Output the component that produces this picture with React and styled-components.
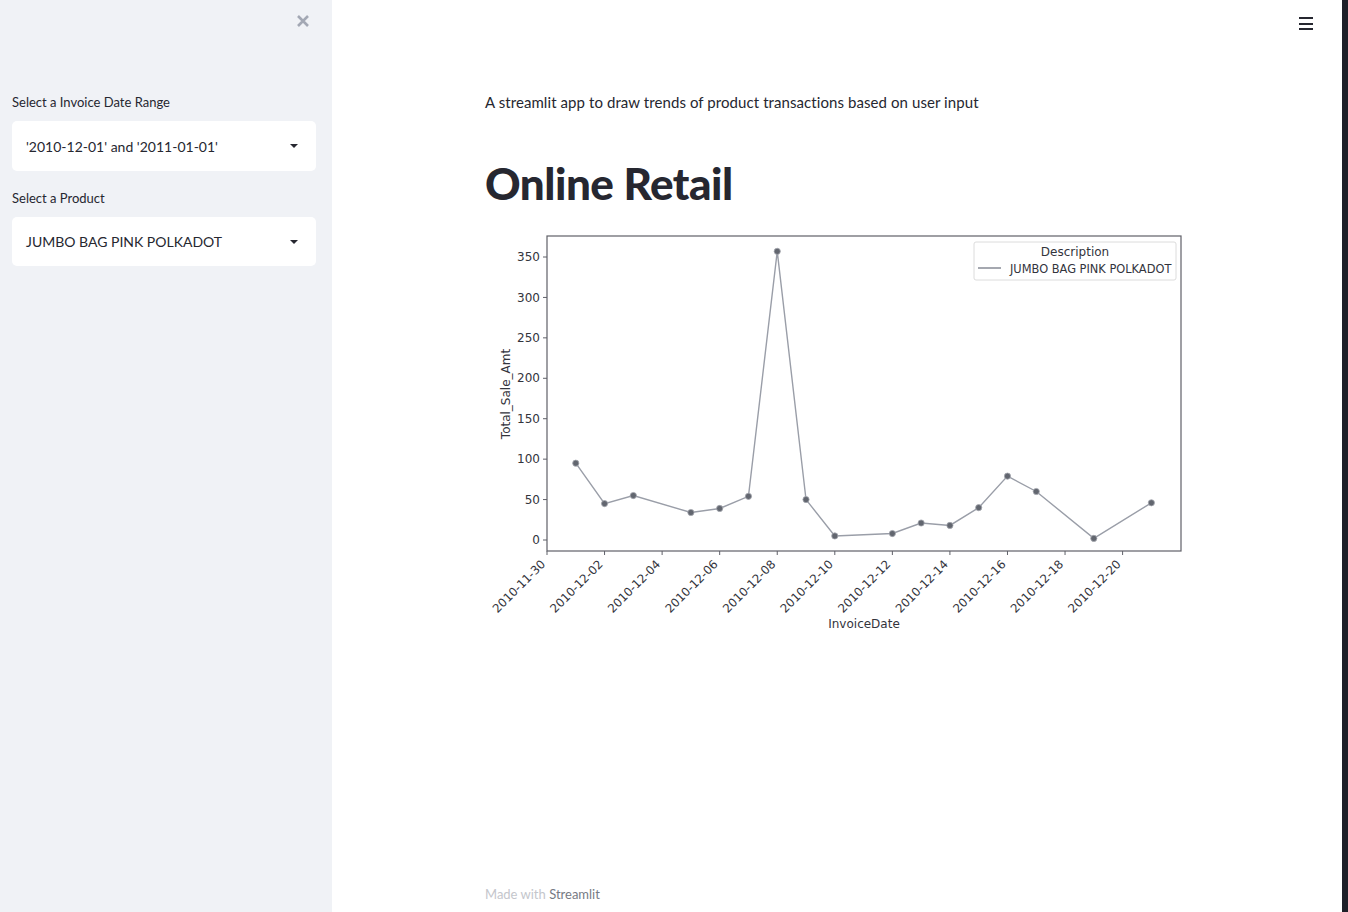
import React from "react";
import styled, { createGlobalStyle } from "styled-components";

const Global = createGlobalStyle`
  html, body { margin: 0; padding: 0; background: #ffffff; }
  body { font-family: "Lato", "Open Sans", sans-serif; color: #262730; }
  * { box-sizing: border-box; }
`;

const Shell = styled.div`
  display: flex;
  width: 100vw;
  height: 100vh;
  overflow: hidden;
`;

const Sidebar = styled.aside`
  width: 332px;
  flex: 0 0 332px;
  background: #f0f2f6;
  padding: 12px 16px 0 12px;
  display: flex;
  flex-direction: column;
  position: relative;
`;

const CloseBtn = styled.div`
  align-self: flex-end;
  margin-right: 4px;
  width: 18px;
  height: 18px;
  display: flex;
  align-items: center;
  justify-content: center;
  color: #a3a8b4;
`;

const FieldGroup = styled.div`
  display: flex;
  flex-direction: column;
  margin-top: ${(p) => p.$top}px;
`;

const Label = styled.label`
  font-size: 13px;
  line-height: 16px;
  color: #262730;
  margin-bottom: 11px;
`;

const SelectBox = styled.div`
  height: ${(p) => p.$h}px;
  background: #ffffff;
  border-radius: 5px;
  display: flex;
  align-items: center;
  justify-content: space-between;
  padding: 0 18px 0 14px;
  font-size: 14px;
  color: #262730;
`;

const Caret = styled.span`
  width: 0;
  height: 0;
  border-left: 4px solid transparent;
  border-right: 4px solid transparent;
  border-top: 4px solid #262730;
`;

const Main = styled.main`
  flex: 1;
  position: relative;
  display: flex;
  flex-direction: column;
  padding: 90px 0 0 153px;
`;

const Hamburger = styled.div`
  position: absolute;
  top: 17px;
  right: 29px;
  width: 14px;
  display: flex;
  flex-direction: column;
  gap: 3.5px;
  span {
    display: block;
    height: 2px;
    background: #262730;
  }
`;

const Subtitle = styled.p`
  margin: 0;
  font-size: 15px;
  line-height: 24px;
  letter-spacing: 0.08px;
  color: #262730;
`;

const Title = styled.h1`
  margin: 40px 0 0 0;
  font-size: 44px;
  line-height: 58px;
  font-weight: 900;
  color: #262730;
  letter-spacing: -0.5px;
`;

const ChartWrap = styled.div`
  margin-top: 16px;
  width: 710px;
  height: 410px;
`;

const Footer = styled.div`
  margin-top: auto;
  margin-bottom: 10px;
  font-size: 13px;
  color: #c4c6cc;
  b {
    font-weight: 400;
    color: #767a84;
  }
`;

const ScrollEdge = styled.div`
  width: 6px;
  flex: 0 0 6px;
  background: #1e1f28;
`;

// chart geometry (page coordinates minus offset)
const OX = 485;
const OY = 228;
const px = (x) => x - OX;
const py = (y) => y - OY;
const X0 = 547; // 2010-11-30
const DAY = 28.78;
const Y0 = 540;
const UNIT = 283 / 350;
const xd = (d) => px(X0 + d * DAY);
const yv = (v) => py(Y0 - v * UNIT);

const data = [
  [1, 95], [2, 45], [3, 55], [5, 34], [6, 39], [7, 54], [8, 357], [9, 50],
  [10, 5], [12, 8], [13, 21], [14, 18], [15, 40], [16, 79], [17, 60], [19, 2], [21, 46],
];

const xTicks = [
  [0, "2010-11-30"], [2, "2010-12-02"], [4, "2010-12-04"], [6, "2010-12-06"],
  [8, "2010-12-08"], [10, "2010-12-10"], [12, "2010-12-12"], [14, "2010-12-14"],
  [16, "2010-12-16"], [18, "2010-12-18"], [20, "2010-12-20"],
];
const yTicks = [0, 50, 100, 150, 200, 250, 300, 350];

const TEXT = "#33343c";
const AX = "#5f6068";

function Chart() {
  const left = px(547), right = px(1181), top = py(236), bottom = py(551);
  const pts = data.map(([d, v]) => `${xd(d)},${yv(v)}`).join(" ");
  return (
    <svg width="710" height="410" viewBox="0 0 710 410" style={{ display: "block" }}>
      <rect x={left} y={top} width={right - left} height={bottom - top} fill="#fff" stroke={AX} strokeWidth="1.2" />
      {yTicks.map((v) => (
        <g key={v}>
          <line x1={left - 4} x2={left} y1={yv(v)} y2={yv(v)} stroke={AX} strokeWidth="1" />
          <text x={left - 7} y={yv(v) + 4.2} textAnchor="end" fontFamily="DejaVu Sans" fontSize="12" fill={TEXT}>{v}</text>
        </g>
      ))}
      {xTicks.map(([d, label]) => (
        <g key={label}>
          <line x1={xd(d)} x2={xd(d)} y1={bottom} y2={bottom + 4} stroke={AX} strokeWidth="1" />
          <text
            x={xd(d) - 1}
            y={py(565)}
            textAnchor="end"
            fontFamily="DejaVu Sans"
            fontSize="11.8"
            fill={TEXT}
            transform={`rotate(-45 ${xd(d) - 1} ${py(565)})`}
          >
            {label}
          </text>
        </g>
      ))}
      <text x={px(864)} y={py(628)} textAnchor="middle" fontFamily="DejaVu Sans" fontSize="12" fill={TEXT}>InvoiceDate</text>
      <text x={px(510)} y={py(394)} textAnchor="middle" fontFamily="DejaVu Sans" fontSize="12" fill={TEXT} transform={`rotate(-90 ${px(510)} ${py(394)})`}>Total_Sale_Amt</text>
      <polyline points={pts} fill="none" stroke="#9a9ea8" strokeWidth="1.4" />
      {data.map(([d, v]) => (
        <circle key={d} cx={xd(d)} cy={yv(v)} r="3.1" fill="#62666f" stroke="#a4a7ae" strokeWidth="0.8" />
      ))}
      <rect x={px(974)} y={py(242)} width="202" height="38" rx="2" fill="#ffffff" fillOpacity="0.8" stroke="#dcdcdc" strokeWidth="1" />
      <text x={px(1075)} y={py(256)} textAnchor="middle" fontFamily="DejaVu Sans" fontSize="12" fill={TEXT}>Description</text>
      <line x1={px(978)} x2={px(1001)} y1={py(268)} y2={py(268)} stroke="#8e929c" strokeWidth="1.6" />
      <text x={px(1010)} y={py(273)} fontFamily="DejaVu Sans" fontSize="11.4" fill={TEXT}>JUMBO BAG PINK POLKADOT</text>
    </svg>
  );
}

export default function App() {
  return (
    <>
      <Global />
      <Shell>
        <Sidebar>
          <CloseBtn>
            <svg width="14" height="14" viewBox="0 0 14 14">
              <path d="M2 2 L12 12 M12 2 L2 12" stroke="#a3a8b4" strokeWidth="2.6" strokeLinecap="butt" />
            </svg>
          </CloseBtn>
          <FieldGroup $top={64}>
            <Label>Select a Invoice Date Range</Label>
            <SelectBox $h={50}>
              <span>'2010-12-01' and '2011-01-01'</span>
              <Caret />
            </SelectBox>
          </FieldGroup>
          <FieldGroup $top={19}>
            <Label>Select a Product</Label>
            <SelectBox $h={49}>
              <span>JUMBO BAG PINK POLKADOT</span>
              <Caret />
            </SelectBox>
          </FieldGroup>
        </Sidebar>
        <Main>
          <Hamburger>
            <span />
            <span />
            <span />
          </Hamburger>
          <Subtitle>A streamlit app to draw trends of product transactions based on user input</Subtitle>
          <Title>Online Retail</Title>
          <ChartWrap>
            <Chart />
          </ChartWrap>
          <Footer>
            Made with <b>Streamlit</b>
          </Footer>
        </Main>
        <ScrollEdge />
      </Shell>
    </>
  );
}
